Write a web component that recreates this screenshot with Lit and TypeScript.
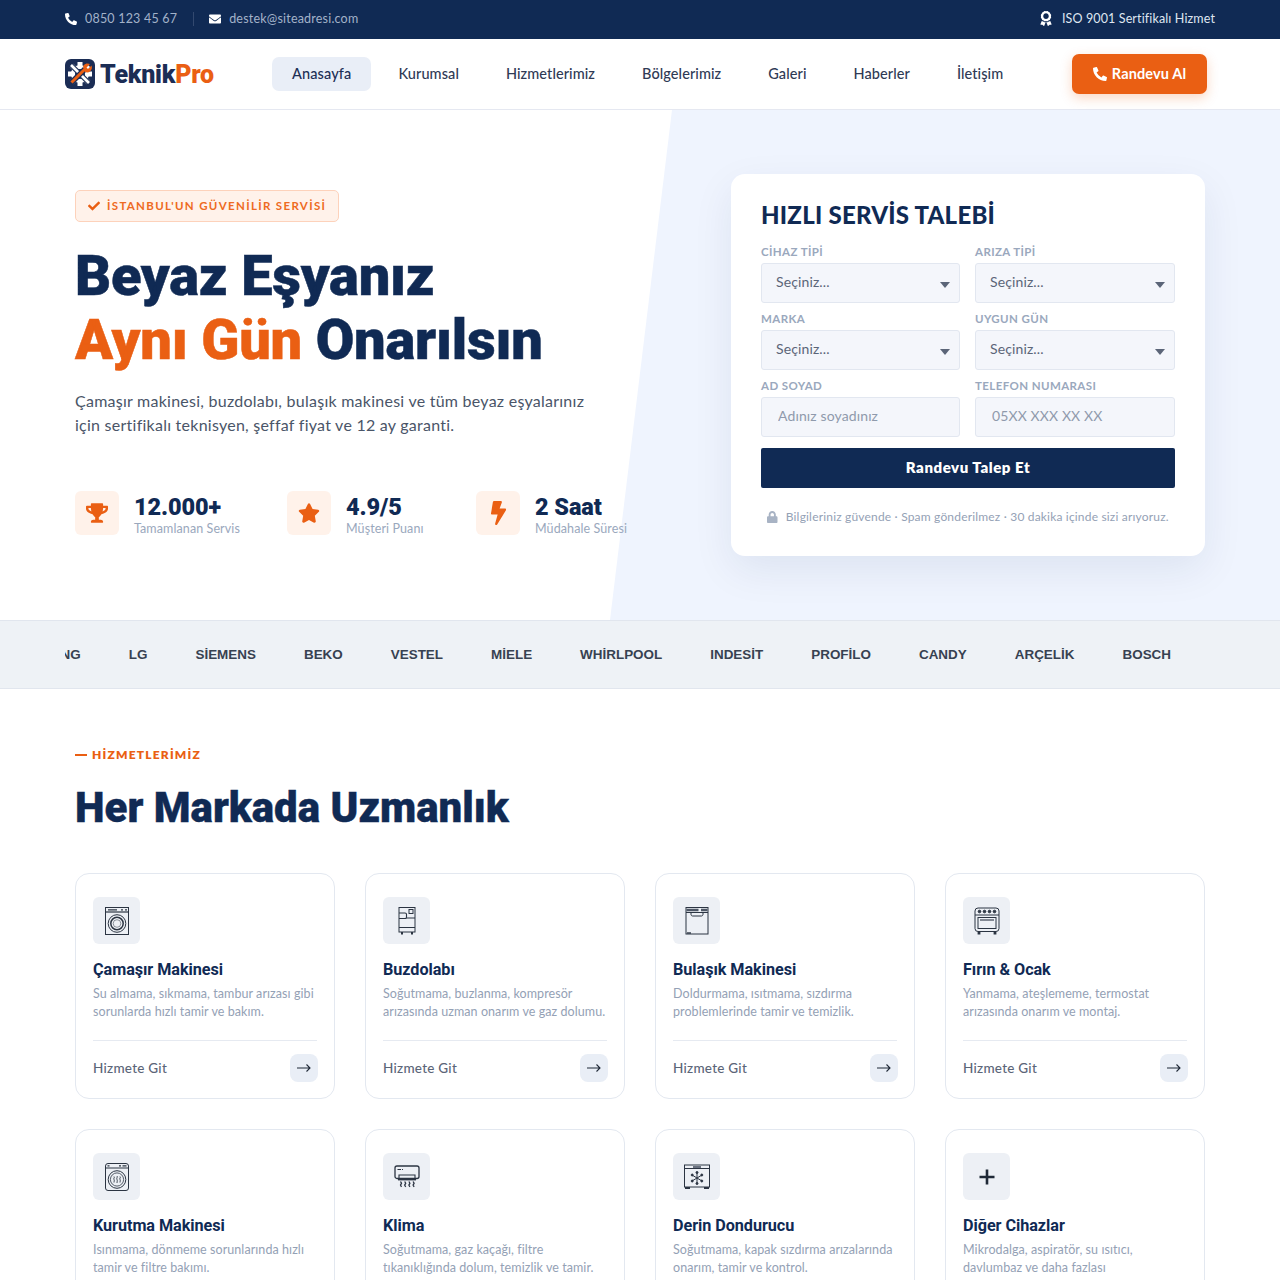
import { LitElement, html, css, svg } from "lit";
import { customElement } from "lit/decorators.js";

const fa = (vb: string, d: string, cls = "") => html`<svg class=${cls} viewBox=${vb} fill="currentColor"><path d=${d}></path></svg>`;
const PHONE = "M497.39 361.8l-112-48a24 24 0 0 0-28 6.9l-49.6 60.6A370.66 370.66 0 0 1 130.6 204.11l60.6-49.6a23.94 23.94 0 0 0 6.9-28l-48-112A24.16 24.16 0 0 0 122.6.61l-104 24A24 24 0 0 0 0 48c0 256.5 207.9 464 464 464a24 24 0 0 0 23.4-18.6l24-104a24.29 24.29 0 0 0-14.01-27.6z";
const MAIL = "M502.3 190.8c3.9-3.1 9.7-.2 9.7 4.7V400c0 26.5-21.5 48-48 48H48c-26.5 0-48-21.5-48-48V195.6c0-5 5.7-7.8 9.7-4.7 22.4 17.4 52.1 39.5 154.1 113.6 21.1 15.4 56.7 47.8 92.2 47.6 35.7.3 72-32.8 92.3-47.6 102-74.1 131.6-96.3 154-113.7zM256 320c23.2.4 56.6-29.2 73.4-41.4 132.7-96.3 142.8-104.7 173.4-128.7 5.8-4.5 9.2-11.5 9.2-18.9v-19c0-26.5-21.5-48-48-48H48C21.5 64 0 85.5 0 112v19c0 7.4 3.4 14.3 9.2 18.9 30.6 23.9 40.7 32.4 173.4 128.7 16.8 12.2 50.2 41.8 73.4 41.4z";
const CHECK = "M173.898 439.404l-166.4-166.4c-9.997-9.997-9.997-26.206 0-36.204l36.203-36.204c9.997-9.998 26.207-9.998 36.204 0L192 312.69 432.095 72.596c9.997-9.997 26.207-9.997 36.204 0l36.203 36.204c9.997 9.997 9.997 26.206 0 36.204l-294.4 294.401c-9.998 9.997-26.207 9.997-36.204-.001z";
const STAR = "M259.3 17.8L194 150.2 47.9 171.5c-26.2 3.8-36.7 36.1-17.7 54.6l105.7 103-25 145.5c-4.5 26.3 23.2 46 46.4 33.7L288 439.6l130.7 68.7c23.2 12.2 50.9-7.4 46.4-33.7l-25-145.5 105.7-103c19-18.5 8.5-50.8-17.7-54.6L382 150.2 316.7 17.8c-11.7-23.6-45.6-23.9-57.4 0z";
const BOLT = "M296 160H180.6l42.6-129.8C227.2 15 215.7 0 200 0H56C44 0 33.8 8.9 32.2 20.8l-32 240C-1.7 275.2 9.5 288 24 288h118.7L96.6 482.5c-3.6 15.2 8 29.5 23.3 29.5 8.4 0 16.4-4.4 20.8-12l176-304c9.3-15.9-2.2-36-20.7-36z";
const TROPHY = "M552 64H448V24c0-13.3-10.7-24-24-24H152c-13.3 0-24 10.7-24 24v40H24C10.7 64 0 74.7 0 88v56c0 35.7 22.5 72.4 61.9 100.7 31.5 22.7 69.8 37.1 110 41.7C203.3 338.5 240 360 240 360v72h-48c-35.3 0-64 20.7-64 56v12c0 6.6 5.4 12 12 12h296c6.6 0 12-5.4 12-12v-12c0-35.3-28.7-56-64-56h-48v-72s36.7-21.5 68.1-73.6c40.3-4.6 78.6-19 110-41.7 39.3-28.3 61.9-65 61.9-100.7V88c0-13.3-10.7-24-24-24zM99.3 192.8C74.9 175.2 64 155.6 64 144v-16h64.2c1 32.6 5.8 61.2 12.8 86.2-15.1-5.2-29.2-12.4-41.7-21.4zM512 144c0 16.1-17.7 36.1-35.3 48.8-12.5 9-26.7 16.2-41.8 21.4 7-25 11.8-53.6 12.8-86.2H512v16z";
const LOCK = "M400 224h-24v-72C376 68.2 307.8 0 224 0S72 68.2 72 152v72H48c-26.5 0-48 21.5-48 48v192c0 26.5 21.5 48 48 48h352c26.5 0 48-21.5 48-48V272c0-26.5-21.5-48-48-48zm-104 0H152v-72c0-39.7 32.3-72 72-72s72 32.3 72 72v72z";
const AWARD = "M97.12 362.63c-8.69-8.69-4.16-6.24-25.12-11.85-9.51-2.55-17.87-7.45-25.43-13.32L1.2 448.7c-4.39 10.77 3.81 22.47 15.43 22.03l52.69-2.01L105.56 507c8 8.44 22.04 5.81 26.43-4.96l52.05-127.62c-10.84 6.04-22.87 9.58-35.31 9.58-19.5 0-37.82-7.59-51.61-21.37zM382.8 448.7l-45.37-111.24c-7.56 5.88-15.92 10.77-25.43 13.32-21.07 5.64-16.45 3.18-25.12 11.85-13.79 13.78-32.12 21.37-51.62 21.37-12.44 0-24.47-3.55-35.31-9.58L252 502.04c4.39 10.77 18.44 13.4 26.43 4.96l36.25-38.28 52.69 2.01c11.62.44 19.82-11.27 15.43-22.03zM263 340c15.28-15.55 17.03-14.21 38.79-20.14 13.89-3.79 24.75-14.84 28.47-28.98 7.48-28.4 5.54-24.97 25.95-45.75 10.17-10.35 14.14-25.44 10.42-39.58-7.47-28.38-7.48-24.42 0-52.83 3.72-14.14-.25-29.23-10.42-39.58-20.41-20.78-18.47-17.36-25.95-45.75-3.72-14.14-14.58-25.19-28.47-28.98-27.88-7.61-24.52-5.62-44.95-26.41-10.17-10.35-25-14.4-38.89-10.61-27.87 7.6-23.98 7.61-51.9 0-13.89-3.79-28.72.25-38.89 10.61-20.41 20.78-17.05 18.8-44.94 26.41-13.89 3.79-24.75 14.84-28.47 28.98-7.47 28.39-5.54 24.97-25.95 45.75-10.17 10.35-14.15 25.44-10.42 39.58 7.47 28.36 7.48 24.4 0 52.82-3.72 14.14.25 29.23 10.42 39.59 20.41 20.78 18.47 17.35 25.95 45.75 3.72 14.14 14.58 25.19 28.47 28.98C104.6 325.96 106.27 325 121 340c13.23 13.47 33.84 15.88 49.74 5.82a39.676 39.676 0 0 1 42.53 0c15.89 10.06 36.5 7.65 49.73-5.82zM97.66 175.96c0-53.03 42.24-96.02 94.34-96.02s94.34 42.99 94.34 96.02-42.24 96.02-94.34 96.02-94.34-42.99-94.34-96.02z";

const line = (inner: unknown) => html`<svg class="svc" viewBox="0 0 26 28" fill="none" stroke="#2b3442" stroke-width="1">${inner}</svg>`;
const ICONS = {
  washer: line(svg`<rect x="1.500" y=".500" width="23" height="27"/><path d="M1.500 5h23" stroke-width="1.200"/><path d="M4 2.800h9M17 2.800h2M21 2.800h2" stroke-width="1.200"/><circle cx="13" cy="16.500" r="8.800"/><circle cx="13" cy="16.500" r="6.200" stroke-width="1.500"/><circle cx="13" cy="16.500" r="3.800" stroke-width=".5"/>`),
  fridge: line(svg`<rect x="5" y=".500" width="16" height="24.500"/><path d="M12 11h9M5 20.500h16"/><rect x="15" y="2.500" width="4" height="4"/><path d="M5 6h6a1.500 1.500 0 0 1 1.500 1.500V10A1.500 1.500 0 0 1 11 11.500H5" stroke-width="1.100"/><path d="M8 25v2.500M18 25v2.500" stroke-width="2"/>`),
  dish: line(svg`<rect x="2" y=".500" width="22" height="26.500"/><path d="M2.500 3h12M17 3h6.500" stroke-width="2.400" stroke="#4d5665"/><path d="M2 5.500h22"/><path d="M7 5.500v1.800c0 1 .7 1.700 1.500 1.700h9c.8 0 1.500-.7 1.500-1.700V5.500"/><path d="M3 26h4" stroke-width="1.400"/>`),
  oven: line(svg`<rect x="1" y="1" width="24" height="23.500" rx="3"/><path d="M1 8h24"/><circle cx="5.500" cy="4.500" r="1.300" fill="#2b3442"/><circle cx="10.500" cy="4.500" r="1.300" fill="#2b3442"/><circle cx="15.500" cy="4.500" r="1.300" fill="#2b3442"/><circle cx="20.500" cy="4.500" r="1.300" fill="#2b3442"/><rect x="4" y="10.500" width="18" height="11"/><path d="M6 13h14" stroke-width="1.100"/><path d="M5 25v2.500M21 25v2.500" stroke-width="2.800"/>`),
  dryer: line(svg`<rect x="1.500" y=".500" width="23" height="27" rx="2.500"/><path d="M1.500 5h23"/><path d="M3.500 2.800h2M15 2.800h2M18.500 2.800h4" stroke-width="1.300"/><circle cx="13" cy="16.500" r="8.800"/><circle cx="13" cy="16.500" r="6.600" stroke-width=".8"/><path d="M10 13.500c1 1-.8 2 0 3c.6 1 0 2 0 3M13 13c1 1-.8 2 0 3.500c.6 1 0 2.500 0 3.500M16 13.500c1 1-.8 2 0 3c.6 1 0 2 0 3" stroke-width=".9"/>`),
  ac: line(svg`<path d="M3 3h20a2 2 0 0 1 2 2v8.500a2 2 0 0 1-2 2H3a2 2 0 0 1-2-2V5a2 2 0 0 1 2-2z" stroke-width="1.300"/><path d="M3.500 6.500h3.500M8 6.500h1" stroke-width="1"/><path d="M5 15.500v-3.500h16v3.500" stroke-width="1.100"/><path d="M4 16.500h18" stroke-width="1.800"/><path d="M6.500 18.500l1 1.800-1 1.800 1 1.800M10.700 18.500l1 1.800-1 1.800 1 1.800M14.900 18.500l1 1.800-1 1.800 1 1.800M19.100 18.500l1 1.800-1 1.800 1 1.800" stroke-width="1.300"/>`),
  freezer: line(svg`<rect x=".500" y="2" width="25" height="22"/><path d="M.500 5.500h25"/><path d="M9 4h8" stroke-width="2" stroke="#6a7280"/><path d="M13 9v12M8 12l10 6M18 12L8 18" stroke-width="1"/><circle cx="13" cy="9.500" r="1" fill="#2b3442"/><circle cx="13" cy="20.500" r="1" fill="#2b3442"/><circle cx="8.200" cy="12" r="1" fill="#2b3442"/><circle cx="17.800" cy="12" r="1" fill="#2b3442"/><circle cx="8.200" cy="18" r="1" fill="#2b3442"/><circle cx="17.800" cy="18" r="1" fill="#2b3442"/><path d="M1 25h5M20 25h5" stroke-width="2.200"/>`),
  plus: html`<svg class="plus" viewBox="0 0 16 16" fill="none" stroke="#1f2937" stroke-width="2.600"><path d="M8 .500v15M.500 8h15"/></svg>`,
};

const SERVICES = [
  ["washer", "Çamaşır Makinesi", "Su almama, sıkmama, tambur arızası gibi sorunlarda hızlı tamir ve bakım."],
  ["fridge", "Buzdolabı", "Soğutmama, buzlanma, kompresör arızasında uzman onarım ve gaz dolumu."],
  ["dish", "Bulaşık Makinesi", "Doldurmama, ısıtmama, sızdırma problemlerinde tamir ve temizlik."],
  ["oven", "Fırın & Ocak", "Yanmama, ateşlememe, termostat arızasında onarım ve montaj."],
  ["dryer", "Kurutma Makinesi", "Isınmama, dönmeme sorunlarında hızlı tamir ve filtre bakımı."],
  ["ac", "Klima", "Soğutmama, gaz kaçağı, filtre tıkanıklığında dolum, temizlik ve tamir."],
  ["freezer", "Derin Dondurucu", "Soğutmama, kapak sızdırma arızalarında onarım, tamir ve kontrol."],
  ["plus", "Diğer Cihazlar", "Mikrodalga, aspiratör, su ısıtıcı, davlumbaz ve daha fazlası"],
] as const;

const BRANDS = ["SAMSUNG", "LG", "SİEMENS", "BEKO", "VESTEL", "MİELE", "WHİRLPOOL", "INDESİT", "PROFİLO", "CANDY", "ARÇELİK", "BOSCH"];
const NAV = ["Anasayfa", "Kurumsal", "Hizmetlerimiz", "Bölgelerimiz", "Galeri", "Haberler", "İletişim"];
const FIELDS = [
  ["CİHAZ TİPİ", "s"], ["ARIZA TİPİ", "s"], ["MARKA", "s"], ["UYGUN GÜN", "s"],
  ["AD SOYAD", "Adınız soyadınız"], ["TELEFON NUMARASI", "05XX XXX XX XX"],
] as const;

@customElement("app-root")
export class AppRoot extends LitElement {
  static styles = css`
    :host { display: block; height: 1280px; overflow: hidden; background: #fff; color: #102a54;
      font-family: "Lato", "Noto Sans", sans-serif; --navy: #102a54; --orange: #ea5f13; --head: "Roboto", "Inter", sans-serif; }
    * { box-sizing: border-box; }
    svg { display: block; flex: none; }

    .top { height: 39px; background: var(--navy); display: flex; align-items: center; padding: 0 65px 2px; font-size: 12.5px; }
    .top .item { display: flex; align-items: center; gap: 8px; color: #a3b2c9; letter-spacing: .2px; }
    .top .item svg { width: 12px; height: 12px; color: #fff; }
    .top .sep { width: 1px; height: 14px; background: #33496f; margin: 0 15px 0 16px; }
    .top .right { margin-left: auto; color: #dfe6f1; gap: 10px; letter-spacing: .13px; }
    .top .right svg { width: 12px; height: 15px; }

    .nav { height: 71px; display: flex; align-items: center; padding: 0 73px 0 65px; border-bottom: 1px solid #e5e8f1; background: #fff; }
    .logo { display: flex; align-items: center; gap: 5px; font: 900 25px/1 var(--head); letter-spacing: -.25px; width: 148px; color: #1b2d55; }
    .logo b { font-weight: inherit; color: var(--orange); }
    .logo svg { width: 30px; height: 30px; }
    .links { display: flex; gap: 7px; margin-left: 59px; }
    .links a { padding: 0 20px 2px; height: 34px; display: flex; align-items: center; font-size: 14.5px; font-weight: 500; letter-spacing: .08px; color: #2f3a55; border-radius: 7px; }
    .links a.on { background: #e9eef7; color: #1d2f55; letter-spacing: .13px; }
    .cta { margin-left: auto; width: 135px; height: 40px; background: var(--orange); color: #fff; border-radius: 7px; display: flex; align-items: center; justify-content: center; gap: 5px; font-size: 14.5px; font-weight: 700; letter-spacing: .12px; box-shadow: 0 4px 12px rgba(234,95,19,.25); }
    .cta span { margin-top: -2px; }
    .cta svg { width: 14px; height: 14px; }

    .hero { position: relative; height: 510px; padding: 0 75px; display: flex; align-items: center; justify-content: space-between; overflow: hidden; }
    .hero::before { content: ""; position: absolute; top: 0; bottom: 0; right: 0; width: 670px; background: #eff4fe; clip-path: polygon(62px 0, 100% 0, 100% 100%, 0 100%); }
    .left, .form { position: relative; }
    .left { width: 560px; padding-bottom: 3px; }
    .badge { display: inline-flex; align-items: center; gap: 7px; height: 32px; padding: 0 12px; background: #fff2ea; border: 1px solid #fdd2bb; border-radius: 5px; color: #ee6a22; font-size: 11.5px; font-weight: 700; letter-spacing: 1.33px; }
    .badge span { margin-top: -2px; }
    .badge svg { width: 12px; height: 12px; color: var(--orange); }
    h1 { margin: 22px 0 0; font: 900 56px/64px var(--head); letter-spacing: -.22px; color: var(--navy); -webkit-text-stroke: .5px currentColor; }
    h1 em { font-style: normal; color: var(--orange); }
    .lead { margin: 17px 0 0; font-size: 16px; line-height: 24px; color: #4a5568; letter-spacing: .25px; }
    .stats { display: grid; grid-template-columns: 212px 189px auto; margin-top: 54px; width: 600px; }
    .stat { display: flex; align-items: flex-start; gap: 15px; }
    .stat i { width: 44px; height: 44px; border-radius: 6px; background: #fff2ea; color: var(--orange); display: flex; align-items: center; justify-content: center; }
    .stat i .t { width: 22px; height: 20px; }
    .stat i .b { width: 15px; height: 24px; transform: skewX(-2deg); }
    .stat div { margin-top: 1px; }
    .stat strong { display: block; font: 900 23.5px/30px var(--head); letter-spacing: -.1px; color: var(--navy); }
    .stat span { display: block; margin-top: -1px; font-size: 12.5px; line-height: 16px; color: #9aa8bd; letter-spacing: .1px; white-space: nowrap; }

    .form { width: 474px; height: 382px; background: #fff; border-radius: 14px; padding: 26px 30px 0; box-shadow: 0 14px 40px rgba(16,42,84,.08); }
    .form h2 { margin: 0; font: 900 24px/30px "Lato", sans-serif; letter-spacing: .25px; color: var(--navy); }
    .grid { display: grid; grid-template-columns: 199px 200px; gap: 8px 15px; margin-top: 14px; }
    .grid label { display: block; font-size: 11.5px; font-weight: 700; line-height: 16px; letter-spacing: .4px; color: #9aa8bd; margin-bottom: 3px; }
    .sel { position: relative; }
    .sel::after { content: ""; position: absolute; right: 10px; top: 19px; border-left: 5.5px solid transparent; border-right: 5.5px solid transparent; border-top: 6px solid #5b6578; pointer-events: none; }
    select, input { display: block; width: 100%; height: 40px; background: #f4f6fb; border: 1px solid #e2e7f0; border-radius: 3px; font: 400 14px "Lato", sans-serif; letter-spacing: .12px; color: #5b6578; padding: 0 14px 4px; outline: none; appearance: none; }
    input { padding: 0 16px 4px; }
    input::placeholder { color: #8f9aac; opacity: 1; }
    .send { height: 40px; margin-top: 11px; padding-bottom: 2px; background: var(--navy); color: #fff; border-radius: 2px; display: flex; align-items: center; justify-content: center; font-size: 15px; font-weight: 800; letter-spacing: .55px; }
    .note { display: flex; align-items: center; justify-content: center; gap: 8px; margin-top: 21px; font-size: 12px; line-height: 16px; color: #94a1b5; letter-spacing: .18px; }
    .note svg { width: 10.500px; height: 12px; color: #a8b3c4; }

    .brands { height: 69px; background: #eef2f6; border-top: 1px solid #e1e6ee; border-bottom: 1px solid #e1e6ee; padding: 0 65px; }
    .brand-track { height: 100%; overflow: hidden; display: flex; align-items: center; justify-content: flex-end; gap: 48px; padding-right: 44px; font: 700 13.440px "Liberation Sans", Arial, sans-serif; color: #374151; white-space: nowrap; }
    .brand-track span { flex: none; }

    .services { padding: 57px 75px 0; }
    .eyebrow { display: flex; align-items: center; gap: 5px; font-size: 12px; line-height: 18px; font-weight: 800; letter-spacing: 1.2px; color: var(--orange); }
    .eyebrow::before { content: ""; width: 12px; height: 2px; background: var(--orange); }
    .services h2 { margin: 17px 0 0; font: 900 42px/54px var(--head); letter-spacing: 0; color: var(--navy); -webkit-text-stroke: .4px currentColor; }
    .cards { display: grid; grid-template-columns: repeat(4, 260px); gap: 30px; margin-top: 38px; }
    .card { height: 226px; border: 1px solid #e3e8f0; border-radius: 14px; padding: 23px 17px 0; display: flex; flex-direction: column; background: #fff; }
    .box { width: 47px; height: 47px; border-radius: 6px; background: #edf0f5; display: flex; align-items: center; justify-content: center; }
    .svc { width: 26px; height: 28px; }
    .plus { width: 16px; height: 16px; }
    .card h3 { margin: 15px 0 0; font: 700 16.200px/22px var(--head); letter-spacing: -.05px; color: var(--navy); }
    .card p { margin: 4px -2px 0 0; font-size: 12.5px; line-height: 18px; color: #94a1b5; letter-spacing: .07px; height: 36px; }
    .foot { margin-top: 19px; border-top: 1px solid #e6eaf1; padding-top: 13px; display: flex; align-items: center; justify-content: space-between; width: 224px; font-size: 13.5px; font-weight: 500; color: #5b6578; letter-spacing: .25px; }
    .arrow { width: 28px; height: 28px; background: #e9eef6; border-radius: 8px; display: flex; align-items: center; justify-content: center; margin-right: -1px; }
    .arrow svg { width: 14px; height: 10px; }
  `;

  private logo() {
    const teeth = [0, 45, 90, 135, 180, 225, 270, 315];
    return html`<svg viewBox="0 0 30 30">
      <rect width="30" height="30" rx="6" fill="#1b2d55"></rect>
      ${teeth.map((a) => svg`<rect x="12.500" y="3" width="5" height="5" fill="#fff" transform="rotate(${a} 15 15)"></rect>`)}
      <circle cx="15" cy="15" r="9" fill="#fff"></circle>
      <circle cx="15" cy="15" r="5" fill="#1b2d55"></circle>
      <path d="M6 6L24 24" stroke="#1b2d55" stroke-width="5"></path>
      <path d="M6 6L24 24" stroke="#fff" stroke-width="2.600"></path>
      <path d="M6 24L20 10" stroke="#1b2d55" stroke-width="5.500"></path>
      <path d="M6.500 23.500L20 10" stroke="#ea5f13" stroke-width="3"></path>
      <path d="M18 7.500a5 5 0 0 1 7-2.500l-3.500 3.500 1.500 1.500 3.500-3.500a5 5 0 0 1-6.500 6.500z" fill="#ea5f13"></path>
    </svg>`;
  }

  render() {
    return html`
      <div class="top">
        <div class="item">${fa("0 0 512 512", PHONE)}<span>0850 123 45 67</span></div>
        <div class="sep"></div>
        <div class="item">${fa("0 0 512 512", MAIL)}<span>destek@siteadresi.com</span></div>
        <div class="item right">${fa("0 0 384 512", AWARD)}<span>ISO 9001 Sertifikalı Hizmet</span></div>
      </div>
      <nav class="nav">
        <div class="logo">${this.logo()}<span>Teknik<b>Pro</b></span></div>
        <div class="links">${NAV.map((n, i) => html`<a class=${i === 0 ? "on" : ""}>${n}</a>`)}</div>
        <div class="cta">${fa("0 0 512 512", PHONE)}<span>Randevu Al</span></div>
      </nav>
      <section class="hero">
        <div class="left">
          <div class="badge">${fa("0 0 512 512", CHECK)}<span>İSTANBUL'UN GÜVENİLİR SERVİSİ</span></div>
          <h1>Beyaz Eşyanız<br /><em>Aynı Gün</em> Onarılsın</h1>
          <p class="lead">Çamaşır makinesi, buzdolabı, bulaşık makinesi ve tüm beyaz eşyalarınız<br />için sertifikalı teknisyen, şeffaf fiyat ve 12 ay garanti.</p>
          <div class="stats">
            <div class="stat"><i>${fa("0 0 576 512", TROPHY, "t")}</i><div><strong>12.000+</strong><span>Tamamlanan Servis</span></div></div>
            <div class="stat"><i>${fa("0 0 576 512", STAR, "t")}</i><div><strong>4.9/5</strong><span>Müşteri Puanı</span></div></div>
            <div class="stat"><i>${fa("0 0 320 512", BOLT, "b")}</i><div><strong>2 Saat</strong><span>Müdahale Süresi</span></div></div>
          </div>
        </div>
        <div class="form">
          <h2>HIZLI SERVİS TALEBİ</h2>
          <div class="grid">
            ${FIELDS.map(([l, t]) => html`<div><label>${l}</label>${t === "s"
              ? html`<div class="sel"><select><option>Seçiniz...</option></select></div>`
              : html`<input placeholder=${t} />`}</div>`)}
          </div>
          <div class="send">Randevu Talep Et</div>
          <div class="note">${fa("0 0 448 512", LOCK)}<span>Bilgileriniz güvende · Spam gönderilmez · 30 dakika içinde sizi arıyoruz.</span></div>
        </div>
      </section>
      <section class="brands"><div class="brand-track">${BRANDS.map((b) => html`<span>${b}</span>`)}</div></section>
      <section class="services">
        <div class="eyebrow">HİZMETLERİMİZ</div>
        <h2>Her Markada Uzmanlık</h2>
        <div class="cards">
          ${SERVICES.map(([ic, t, d]) => html`<article class="card">
            <div class="box">${ICONS[ic]}</div>
            <h3>${t}</h3>
            <p>${d}</p>
            <div class="foot"><span>Hizmete Git</span><div class="arrow"><svg viewBox="0 0 14 10" fill="none" stroke="#1f2937" stroke-width="1.100"><path d="M0 5h13M9.500 1.500L13 5 9.500 8.500"></path></svg></div></div>
          </article>`)}
        </div>
      </section>
    `;
  }
}
